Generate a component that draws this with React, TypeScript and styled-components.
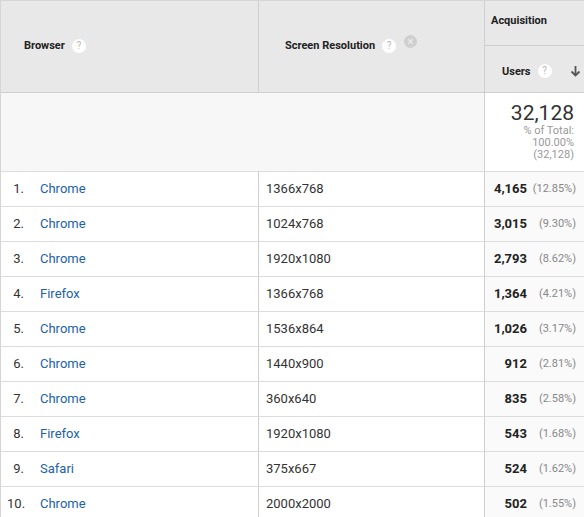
import React from "react";
import styled, { createGlobalStyle } from "styled-components";

const Global = createGlobalStyle`
  html, body { margin: 0; padding: 0; background: #fff; }
  body { font-family: Roboto, "Noto Sans", Arial, sans-serif; overflow: hidden; }
`;

const Table = styled.div`
  width: 584px;
  height: 517px;
  overflow: hidden;
  display: grid;
  grid-template-columns: 258px 226px 100px;
  grid-template-rows: 92px 79px repeat(10, 35px);
  border-top: 1px solid #d5d5d5;
  border-left: 1px solid #d5d5d5;
  box-sizing: border-box;
`;

const HeadCell = styled.div<{ $pad: number }>`
  background: #e8e8e8;
  border-right: 1px solid #cfcfcf;
  border-bottom: 1px solid #cfcfcf;
  display: flex;
  align-items: center;
  font-size: 11px;
  font-weight: 700;
  color: #222;
  padding-left: ${(p) => p.$pad}px;
  padding-bottom: 2px;
  box-sizing: border-box;
`;

const HeadText = styled.span`
  margin-right: 7px;
`;

const MetricHead = styled.div`
  background: #e8e8e8;
  border-right: 1px solid #cfcfcf;
  border-bottom: 1px solid #cfcfcf;
  display: grid;
  grid-template-rows: 45px 1fr;
  box-sizing: border-box;
`;

const GroupTitle = styled.div`
  border-bottom: 1px solid #cfcfcf;
  font-size: 11px;
  font-weight: 700;
  color: #222;
  padding: 13px 0 0 6px;
  box-sizing: border-box;
`;

const MetricTitle = styled.div`
  display: flex;
  align-items: center;
  font-size: 11px;
  font-weight: 700;
  color: #222;
  padding: 4px 0 0 17px;
`;

const Help = styled.span`
  width: 14px;
  height: 14px;
  border-radius: 50%;
  background: #fff;
  color: #b8b8b8;
  font-size: 10px;
  font-weight: 400;
  display: inline-flex;
  align-items: center;
  justify-content: center;
  line-height: 1;
`;

const Remove = styled.span`
  width: 13px;
  height: 13px;
  margin-left: 8px;
  margin-top: -8px;
  display: inline-flex;
`;

const Arrow = styled.span`
  margin-left: auto;
  margin-right: 3px;
  display: inline-flex;
`;

const TotalBlank = styled.div`
  grid-column: span 2;
  background: #f7f7f7;
  border-right: 1px solid #cfcfcf;
  border-bottom: 1px solid #dcdcdc;
`;

const TotalCell = styled.div`
  background: #fff;
  border-right: 1px solid #cfcfcf;
  border-bottom: 1px solid #dcdcdc;
  text-align: right;
  padding: 8px 10px 0 0;
  box-sizing: border-box;
`;

const TotalValue = styled.div`
  font-size: 21px;
  color: #333;
  line-height: 24px;
`;

const TotalSub = styled.div`
  font-size: 11px;
  color: #999;
  line-height: 12px;
`;

const Cell = styled.div<{ $pad?: number }>`
  background: #fff;
  border-right: 1px solid #cfcfcf;
  border-bottom: 1px solid #dcdcdc;
  display: flex;
  align-items: center;
  font-size: 13px;
  color: #333;
  box-sizing: border-box;
  padding: 0 0 1px ${(p) => p.$pad ?? 7}px;
`;

const MetricCell = styled(Cell)`
  background: #fafafa;
  justify-content: flex-end;
  padding: 0 8px 1px 0;
`;

const Index = styled.span`
  width: 17px;
  text-align: right;
  margin-right: 16px;
  color: #333;
`;

const Link = styled.span`
  color: #2162a8;
`;

const Val = styled.span`
  font-weight: 700;
  color: #222;
`;

const Pct = styled.span`
  font-size: 11px;
  color: #888;
  width: 49px;
  text-align: right;
`;

const rows = [
  ["Chrome", "1366x768", "4,165", "(12.85%)"],
  ["Chrome", "1024x768", "3,015", "(9.30%)"],
  ["Chrome", "1920x1080", "2,793", "(8.62%)"],
  ["Firefox", "1366x768", "1,364", "(4.21%)"],
  ["Chrome", "1536x864", "1,026", "(3.17%)"],
  ["Chrome", "1440x900", "912", "(2.81%)"],
  ["Chrome", "360x640", "835", "(2.58%)"],
  ["Firefox", "1920x1080", "543", "(1.68%)"],
  ["Safari", "375x667", "524", "(1.62%)"],
  ["Chrome", "2000x2000", "502", "(1.55%)"],
];

export default function App() {
  return (
    <>
      <Global />
      <Table>
        <HeadCell $pad={23}>
          <HeadText>Browser</HeadText>
          <Help>?</Help>
        </HeadCell>
        <HeadCell $pad={26}>
          <HeadText>Screen Resolution</HeadText>
          <Help>?</Help>
          <Remove>
            <svg width="13" height="13" viewBox="0 0 13 13">
              <circle cx="6.5" cy="6.5" r="6.5" fill="#cfcfcf" />
              <path d="M4.3 4.3 L8.7 8.7 M8.7 4.3 L4.3 8.7" stroke="#e8e8e8" strokeWidth="1.6" />
            </svg>
          </Remove>
        </HeadCell>
        <MetricHead>
          <GroupTitle>Acquisition</GroupTitle>
          <MetricTitle>
            <HeadText>Users</HeadText>
            <Help>?</Help>
            <Arrow>
              <svg width="11" height="12" viewBox="0 0 11 12">
                <path d="M5.5 1 V10.5 M1.5 6.5 L5.5 10.5 L9.5 6.5" stroke="#555" strokeWidth="1.8" fill="none" />
              </svg>
            </Arrow>
          </MetricTitle>
        </MetricHead>

        <TotalBlank />
        <TotalCell>
          <TotalValue>32,128</TotalValue>
          <TotalSub>% of Total:</TotalSub>
          <TotalSub>100.00%</TotalSub>
          <TotalSub>(32,128)</TotalSub>
        </TotalCell>

        {rows.map((r, i) => (
          <React.Fragment key={i}>
            <Cell $pad={6}>
              <Index>{i + 1}.</Index>
              <Link>{r[0]}</Link>
            </Cell>
            <Cell $pad={7}>{r[1]}</Cell>
            <MetricCell>
              <Val>{r[2]}</Val>
              <Pct>{r[3]}</Pct>
            </MetricCell>
          </React.Fragment>
        ))}
      </Table>
    </>
  );
}
